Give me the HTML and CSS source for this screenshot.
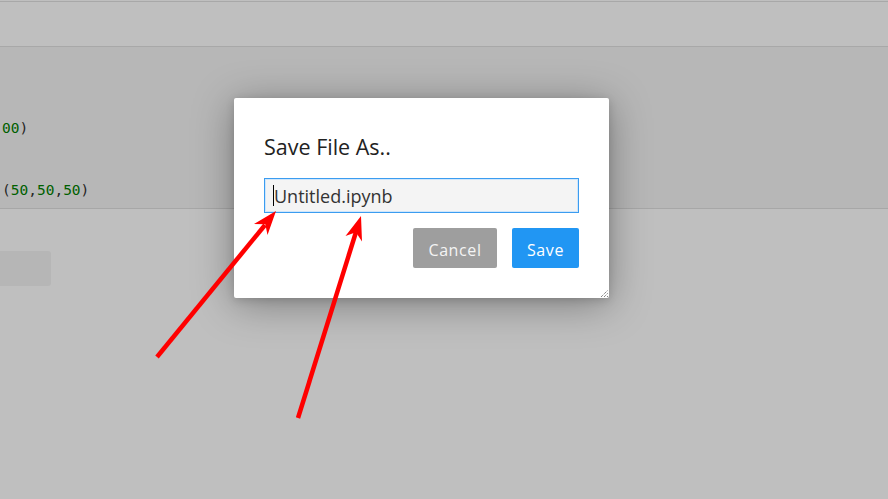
FILE: index.html
```html
<!DOCTYPE html>
<html>
<head>
<meta charset="utf-8">
<link rel="stylesheet" href="styles.css">
</head>
<body>
<div class="page">
  <div class="toolbar"></div>
  <div class="cell">
<pre class="code"><span class="num">00</span>)


(<span class="num">50</span>,<span class="num">50</span>,<span class="num">50</span>)</pre>
  </div>
  <div class="output">
    <div class="prompt-box"></div>
  </div>
</div>
<div class="backdrop"></div>
<div class="modal">
  <h2 class="modal-title">Save File As..</h2>
  <div class="field"><span class="caret"></span>Untitled.ipynb</div>
  <div class="actions">
    <button class="btn btn-cancel">Cancel</button>
    <button class="btn btn-save">Save</button>
  </div>
  <svg class="grip" width="9" height="9" viewBox="0 0 9 9">
    <path d="M1 8 L8 1 M4 8 L8 4 M7 8 L8 7" stroke="#555" stroke-width="1" stroke-dasharray="1 1" fill="none"/>
  </svg>
</div>
<svg class="arrows" width="888" height="499" viewBox="0 0 888 499">
  <g stroke="#ff0000" stroke-width="4.5" stroke-linecap="butt" fill="none">
    <line x1="157" y1="357" x2="265" y2="225"/>
    <line x1="298" y1="418" x2="356" y2="232"/>
  </g>
  <g fill="#ff0000">
    <polygon points="276,211 267.5,235 265.3,224.2 254,224"/>
    <polygon points="361,216 362,241.5 355.9,232.2 345.5,236"/>
  </g>
</svg>
</body>
</html>
```
FILE: styles.css
```css
html, body {
  margin: 0;
  padding: 0;
  width: 888px;
  height: 499px;
  overflow: hidden;
  background: #ffffff;
}

.page {
  padding-top: 1px;
  display: flex;
  flex-direction: column;
  height: 498px;
}

.toolbar {
  height: 44px;
  border-top: 1px solid #e0e0e0;
  border-bottom: 1px solid #e0e0e0;
  background: #ffffff;
}

.cell {
  height: 161px;
  background: #f5f5f5;
  border-bottom: 1px solid #dfdfdf;
  overflow: hidden;
}

.code {
  margin: 0;
  padding: 71px 0 0 2px;
  font-family: "DejaVu Sans Mono", monospace;
  font-size: 14.5px;
  line-height: 20.7px;
  color: #333333;
}

.num {
  color: #008000;
}

.output {
  flex: 1;
  padding-top: 42px;
}

.prompt-box {
  width: 51px;
  height: 35px;
  background: #f3f3f3;
  border-radius: 0 3px 3px 0;
}

.backdrop {
  position: absolute;
  left: 0;
  top: 0;
  width: 888px;
  height: 499px;
  background: rgba(0, 0, 0, 0.25);
}

.modal {
  position: absolute;
  left: 234px;
  top: 98px;
  width: 375px;
  height: 200px;
  box-sizing: border-box;
  padding: 34px 30px 30px 30px;
  background: #ffffff;
  border-radius: 2px;
  box-shadow: 0 6px 40px rgba(0, 0, 0, 0.35), 0 2px 8px rgba(0, 0, 0, 0.15);
  font-family: "Open Sans", sans-serif;
}

.modal-title {
  margin: 0;
  font-size: 21.5px;
  font-weight: 400;
  line-height: 30px;
  color: #222222;
}

.field {
  margin-top: 16px;
  height: 35px;
  box-sizing: border-box;
  padding-left: 8px;
  display: flex;
  align-items: center;
  border: 1px solid #3b9cf0;
  box-shadow: inset 0 0 0 1px #cfe6fb;
  background: #f4f4f4;
  font-size: 18px;
  color: #333333;
}

.caret {
  display: inline-block;
  width: 1px;
  height: 21px;
  background: #000000;
  margin-right: 0;
}

.actions {
  margin-top: 15px;
  display: flex;
  justify-content: flex-end;
  gap: 15px;
}

.btn {
  height: 40px;
  border: none;
  border-radius: 2px;
  font-family: "Open Sans", sans-serif;
  font-size: 16px;
  font-weight: 500;
  letter-spacing: 0.6px;
  padding: 3px 0 0 0;
  cursor: pointer;
}

.btn-cancel {
  width: 84px;
  background: #9e9e9e;
  color: #f4f4f4;
}

.btn-save {
  width: 67px;
  background: #2196f3;
  color: #ffffff;
}

.grip {
  position: absolute;
  right: 0;
  bottom: 0;
}

.arrows {
  position: absolute;
  left: 0;
  top: 0;
}
```
